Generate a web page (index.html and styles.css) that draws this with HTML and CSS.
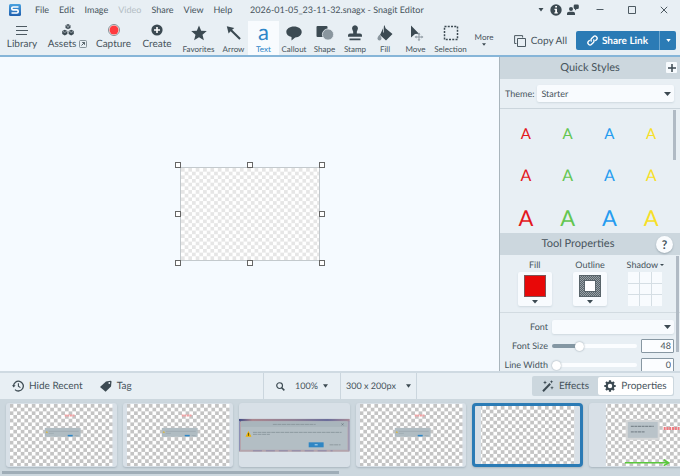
FILE: index.html
```html
<!DOCTYPE html>
<html lang="en">
<head>
<meta charset="utf-8">
<title>2026-01-05_23-11-32.snagx - Snagit Editor</title>
<link rel="stylesheet" href="styles.css">
</head>
<body>
<svg class="defs" aria-hidden="true">
  <defs>
    <pattern id="check" width="7.400" height="7.400" patternUnits="userSpaceOnUse">
      <rect width="7.400" height="7.400" fill="#fff"/>
      <path d="M3.700 0h3.700v3.700h-3.700zM0 3.700h3.700v3.700h-3.700z" fill="#c4c4c4"/>
    </pattern>
    <pattern id="hatch" width="2" height="2" patternUnits="userSpaceOnUse">
      <rect width="2" height="2" fill="#59646a"/>
      <path d="M0 0h1v1h-1zM1 1h1v1h-1z" fill="#98a1a6"/>
    </pattern>
    <linearGradient id="photo">
      <stop offset="0" stop-color="#3e4a86"/><stop offset=".12" stop-color="#a9868f"/>
      <stop offset=".5" stop-color="#8f7f95"/><stop offset=".8" stop-color="#6b6d9a"/>
      <stop offset="1" stop-color="#a78a98"/>
    </linearGradient>
    <linearGradient id="brand" x2="0" y2="1">
      <stop offset="0" stop-color="#4ba3e0"/><stop offset="1" stop-color="#1f5fae"/>
    </linearGradient>
    <symbol id="dialog-shot" viewBox="0 0 111 63">
      <rect x="4" width="103" height="63" fill="url(#check)"/>
      <path d="M59 11.500h10" stroke="#f2a0a2" stroke-width="2" stroke-dasharray="2 .6"/>
      <rect x="39" y="24" width="36" height="9" fill="#b0bcc2"/>
      <path d="M43 27.500h30M43 29.500h5" stroke="#9aa7ae" stroke-width=".7"/>
      <path d="M41 27l1.200 2h-2.400z" fill="#e2b52a"/>
      <rect x="62" y="31" width="5" height="1.500" fill="#2d86c6"/>
      <path d="M69 31.700h4" stroke="#9aa7ae" stroke-width=".7"/>
    </symbol>
  </defs>
</svg>

<div class="app">
  <header class="top">
    <div class="titlebar">
      <svg class="logo" viewBox="0 0 12 12"><rect width="12" height="12" rx="1.500" fill="url(#brand)"/><path d="M9.500 3H4.200Q2.800 3 2.800 4.400T4.200 5.900H7.800Q9.200 5.900 9.200 7.400T7.800 9H2.500" fill="none" stroke="#fff" stroke-width="1.700"/></svg>
      <nav class="menu">
        <button>File</button><button>Edit</button><button>Image</button><button disabled>Video</button><button>Share</button><button>View</button><button>Help</button>
      </nav>
      <h1 class="title">2026-01-05_23-11-32.snagx - Snagit Editor</h1>
      <div class="window-buttons">
        <button class="menu-arrow" aria-label="Options"><svg viewBox="0 0 6 4" width="6" height="4"><path d="M.5 0h5L3 3.500z"/></svg></button>
        <button class="info" aria-label="Information"><svg viewBox="0 0 12 12" width="12" height="12"><circle cx="6" cy="6" r="5.700"/><path d="M5.200 2h1.800v1.600h-1.800zM4.500 4.800h2.500v3.400h.8v1.200h-3.400v-1.200h.8v-2.200h-.7z" fill="#fff"/></svg></button>
        <button class="account" aria-label="Account"><svg viewBox="0 0 12 12" width="12" height="12"><circle cx="4" cy="5" r="2"/><path d="M0 11V9.500Q0 7.700 2 7.700H6Q8 7.700 8 9.500V11zM8 .5h2.500q1.300 0 1.300 1.300v2q0 1.200-1.300 1.200h-.8L8 6.500V5q-1.300 0-1.300-1.200v-2Q6.700.5 8 .5z"/></svg></button>
        <button class="win" aria-label="Minimize"><svg viewBox="0 0 8 8" width="8" height="8"><path class="line" d="M.5 3.500h7"/></svg></button>
        <button class="win" aria-label="Maximize"><svg viewBox="0 0 8 8" width="8" height="8"><path class="line" d="M.5.5h7v7h-7z"/></svg></button>
        <button class="win" aria-label="Close"><svg viewBox="0 0 8 8" width="8" height="8"><path class="line" d="M.8.800l6.400 6.400M7.200.800L.8 7.200"/></svg></button>
      </div>
    </div>

    <div class="toolbar">
      <button class="main-tool"><svg viewBox="0 0 12 12" width="12" height="12"><path class="line" d="M0 2.500h11M0 6.500h12M0 10.500h11"/></svg><span>Library</span></button>
      <button class="main-tool"><svg viewBox="0 0 12 12" width="12" height="12"><path d="M6 0l2.500 1.200v2.700L6 5.200 3.500 3.900V1.200zM2.800 5.800l2.600 1.300v3L2.800 11.600.2 10.100v-3zM9.200 5.800l2.600 1.300v3l-2.600 1.500-2.600-1.500v-3z"/><path d="M4 1.500l2 .9 2-.9M6 2.400v2M.8 7.400l2 1 2-1M7.200 7.400l2 1 2-1" fill="none" stroke="#c3ccd2" stroke-width=".7"/></svg><span>Assets <svg class="external" viewBox="0 0 8 8" width="8" height="8"><rect x=".5" y=".5" width="7" height="7" rx="1" fill="none" stroke="#6f7c84" stroke-width=".8"/><path d="M2.500 5.500l3-3M3.200 2.500h2.300v2.300" fill="none" stroke="#46535b" stroke-width=".9"/></svg></span></button>
      <button class="main-tool"><svg viewBox="0 0 12 12" width="12" height="12"><circle cx="6" cy="6" r="5.500" fill="#fff" stroke="#6a747a" stroke-width=".8"/><circle cx="6" cy="6" r="4.500" fill="#ff3b3f"/></svg><span>Capture</span></button>
      <button class="main-tool"><svg viewBox="0 0 12 12" width="12" height="12"><circle cx="6" cy="6" r="5.600"/><path d="M6 3v6M3 6h6" stroke="#fff" stroke-width="1.600"/></svg><span>Create</span></button>

      <button class="tool"><svg viewBox="0 0 16 16"><path d="M8 .5l2.200 5.200 5.600.4-4.300 3.600 1.400 5.500L8 12.200l-4.900 3 1.400-5.500L.2 6.100l5.600-.4z"/></svg><span>Favorites</span></button>
      <button class="tool"><svg viewBox="0 0 16 16"><path d="M.8 1.200l7.500 1.700-2.200 1.900 8.700 8.500-1.500 1.500L4.600 6.300 2.600 8.600z"/></svg><span>Arrow</span></button>
      <button class="tool active" aria-pressed="true"><b class="glyph">a</b><span>Text</span></button>
      <button class="tool"><svg viewBox="0 0 16 16"><path d="M8 1.500c4.400 0 7.700 2.400 7.700 5.500 0 3-2.700 5.200-6.500 5.400L5.500 15.500V12C2.400 11.300.3 9.400.3 7 .3 3.900 3.600 1.500 8 1.500z"/></svg><span>Callout</span></button>
      <button class="tool"><svg viewBox="0 0 18 16"><rect x=".5" y="1" width="11" height="11" rx="1"/><circle cx="12" cy="9.500" r="5.600" fill="#8a969e" stroke="#e8eff4" stroke-width=".8"/></svg><span>Shape</span></button>
      <button class="tool"><svg viewBox="0 0 16 16"><path d="M8 .3a3 3 0 0 1 2.600 4.400Q9.500 6.500 9.800 8.500H13q2 0 2 2v1.200H1V10.500q0-2 2-2h3.200Q6.500 6.500 5.400 4.700A3 3 0 0 1 8 .3zM2.500 13.500h11v1.700h-11z"/></svg><span>Stamp</span></button>
      <button class="tool"><svg viewBox="0 0 16 16"><path d="M7.500 0l1 3.300L15.500 9 9 15.500 3 10z"/><path d="M6.500 1v6.500" fill="none" stroke="#d8e0e5" stroke-width=".8"/><path d="M2.500 9.500q2 2.500 2 4a2 2 0 0 1-4 0q0-1.500 2-4z" fill="#8a969e"/></svg><span>Fill</span></button>
      <button class="tool"><svg viewBox="0 0 16 16"><path d="M3 .5l8 8.300-4 .3L3 12.500z"/><path d="M11 7.500l1.500 1.900h-1v2h2v-1l1.900 1.600-1.900 1.500v-1h-2v2h1L11 16l-1.500-1.500h1v-2h-2v1L6.600 12l1.900-1.600v1h2v-2h-1z" fill="#8a969e"/></svg><span>Move</span></button>
      <button class="tool"><svg viewBox="0 0 16 16"><rect x="1.500" y="1.500" width="13" height="13" fill="none" stroke="#3c4a52" stroke-width="1.500" stroke-dasharray="2 1.250"/></svg><span>Selection</span></button>
      <button class="more"><span>More</span><svg viewBox="0 0 6 4" width="4" height="3"><path d="M0 0h6L3 4z"/></svg></button>

      <div class="actions">
        <button class="copy"><svg viewBox="0 0 12 12" width="12" height="12"><path class="line" d="M2.500 8.500H.6V.6h8v1.900M3.500 3.500h8v8h-8z"/></svg>Copy All</button>
        <div class="share">
          <button class="share-main"><svg viewBox="0 0 12 12" width="11" height="11"><path d="M5 7.200a2.400 2.400 0 0 1 0-3.400L7 1.800a2.300 2.300 0 0 1 3.300 3.300L9 6.400M7 4.800a2.400 2.400 0 0 1 0 3.400l-2 2A2.300 2.300 0 0 1 1.700 6.900L3 5.600" fill="none" stroke="#fff" stroke-width="1.500"/></svg>Share Link</button>
          <button class="share-more" aria-label="Share options"><svg viewBox="0 0 6 4" width="5" height="3"><path d="M0 0h6L3 4z"/></svg></button>
        </div>
      </div>
    </div>
  </header>

  <div class="workspace">
    <main class="stage">
      <div class="canvas">
        <i class="handle nw"></i><i class="handle n"></i><i class="handle ne"></i><i class="handle w"></i><i class="handle e"></i><i class="handle sw"></i><i class="handle s"></i><i class="handle se"></i>
      </div>
    </main>

    <aside class="panel">
      <div class="panel-head">
        <h2>Quick Styles</h2>
        <button class="add" aria-label="Add style"><svg viewBox="0 0 10 10" width="10" height="10"><path d="M5 1v8M1 5h8" stroke="#3c4a52" stroke-width="1.500"/></svg></button>
      </div>
      <div class="theme">
        <label for="theme">Theme:</label>
        <select id="theme"><option>Starter</option></select>
      </div>
      <div class="styles">
        <button class="red">A</button><button class="green">A</button><button class="blue">A</button><button class="yellow">A</button>
        <button class="red mid">A</button><button class="green mid">A</button><button class="blue mid">A</button><button class="yellow mid">A</button>
        <button class="red big">A</button><button class="green big">A</button><button class="blue big">A</button><button class="yellow big">A</button>
        <i class="scroll"></i>
      </div>
      <div class="panel-head">
        <h2 class="tool-title">Tool Properties</h2>
        <button class="help" aria-label="Help">?</button>
      </div>
      <div class="props">
        <div class="swatches">
          <div class="swatch"><span>Fill</span><button aria-label="Fill color"><svg viewBox="0 0 22 22" width="22" height="22"><rect x=".5" y=".5" width="21" height="21" fill="#e80808" stroke="#7d5558"/></svg><svg viewBox="0 0 6 4" width="6" height="4"><path d="M0 0h6L3 3.500z"/></svg></button></div>
          <div class="swatch"><span>Outline</span><button aria-label="Outline color"><svg viewBox="0 0 22 22" width="22" height="22"><rect x=".5" y=".5" width="21" height="21" fill="url(#hatch)" stroke="#59646a"/><rect x="5.500" y="5.500" width="11" height="11" fill="#fff" stroke="#59646a"/></svg><svg viewBox="0 0 6 4" width="6" height="4"><path d="M0 0h6L3 3.500z"/></svg></button></div>
          <div class="swatch"><span>Shadow <svg viewBox="0 0 4 3" width="4" height="3"><path d="M0 0h4L2 2z"/></svg></span><div class="nine"><i></i><i></i><i></i><i></i><i></i><i></i><i></i><i></i><i></i></div></div>
        </div>
        <div class="fields">
          <label for="font">Font</label>
          <select id="font" class="wide"><option></option></select>
          <label for="size">Font Size</label>
          <input id="size" type="range" class="at-size" min="0" max="160" value="48">
          <input type="text" value="48" aria-label="Font size value">
          <label for="line">Line Width</label>
          <input id="line" type="range" min="0" max="100" value="0">
          <input type="text" value="0" aria-label="Line width value">
        </div>
        <i class="scroll"></i>
      </div>
    </aside>
  </div>

  <div class="status">
    <div class="status-left">
      <button><svg viewBox="0 0 12 12" width="12" height="12"><path d="M1.500 6A4.900 4.900 0 1 1 3 9.600" fill="none" stroke="#3c4a52" stroke-width="1.300"/><path d="M0 5.200h3.600L1.700 7.600z"/><path d="M6.400 3.200v3.100l2 1.300" fill="none" stroke="#3c4a52" stroke-width="1.100"/></svg>Hide Recent</button>
      <button><svg viewBox="0 0 12 12" width="12" height="12"><path d="M6 1.500l4.500-.7q1 0 1 1L11 6.500 5.600 11.700 0 7z"/><circle cx="9.300" cy="3" r=".9" fill="#e8eff4"/></svg>Tag</button>
    </div>
    <button class="zoom"><svg viewBox="0 0 10 10" width="9" height="9"><circle cx="4" cy="4" r="3.200" fill="none" stroke="#3c4a52" stroke-width="1.300"/><path d="M6.300 6.300l3 3" stroke="#3c4a52" stroke-width="1.700"/></svg><span>100%</span><svg viewBox="0 0 6 4" width="5" height="4"><path d="M0 0h6L3 4z"/></svg></button>
    <button class="dims"><span>300 x 200px</span><svg viewBox="0 0 6 4" width="5" height="4"><path d="M0 0h6L3 4z"/></svg></button>
    <div class="status-right">
      <div class="tabs">
        <button><svg viewBox="0 0 12 12" width="12" height="12"><path d="M1 11.200L8.200 3.800" stroke="#3c4a52" stroke-width="2"/><path d="M3 .5l.6 1.400L5 2.500l-1.400.6L3 4.500l-.6-1.400L1 2.500l1.400-.6zM9.500 0l.5 1.200 1.300.5-1.300.5-.5 1.300L9 2.200l-1.200-.5L9 1.200zM10 6l.5 1.300 1.300.5-1.300.5L10 9.700l-.5-1.400-1.300-.5 1.300-.5z"/></svg>Effects</button>
        <button class="on" aria-pressed="true"><svg viewBox="0 0 12 12" width="12" height="12"><circle cx="6" cy="6" r="3.300" fill="none" stroke="#3c4a52" stroke-width="2.200"/><path d="M6 .3v2M6 9.700v2M.3 6h2M9.700 6h2M2 2l1.400 1.400M8.600 8.600L10 10M2 10l1.400-1.400M8.600 3.400L10 2" stroke="#3c4a52" stroke-width="2.200"/></svg>Properties</button>
      </div>
    </div>
  </div>

  <footer class="tray">
    <div class="cards">
      <button class="card" aria-label="Capture 1"><svg viewBox="0 0 111 63"><use href="#dialog-shot"/></svg></button>
      <button class="card" aria-label="Capture 2"><svg viewBox="0 0 111 63"><use href="#dialog-shot"/></svg></button>
      <button class="card" aria-label="Capture 3"><svg viewBox="0 0 111 63">
        <rect y="15" width="111" height="33" fill="#b5a4ac"/><rect y="15" width="111" height="2.500" fill="url(#photo)"/><path d="M.5 17v30M110.500 17v30" stroke="#8a8fb4"/><path d="M14 47h80" stroke="#8c87a8" stroke-dasharray="9 4"/>
        <rect x="2" y="17.500" width="107" height="28.500" fill="#b3bec4"/><rect x="2" y="17.500" width="107" height="5.500" fill="#a9b5bc"/>
        <path d="M34 20.500h43M14 28.500h89M14 30.500h17M91 41h11" stroke="#8d999f" stroke-width="1" stroke-dasharray="4 .6"/><path d="M103 19.500l2 2M105 19.500l-2 2" stroke="#68757d" stroke-width=".7"/>
        <path d="M9.500 27l3 6h-6z" fill="#f0b400"/><path d="M9.500 29v3" stroke="#4a3f10" stroke-width=".8"/><rect x="70" y="38.500" width="15" height="5" fill="#2f86c4"/><path d="M76 41h3" stroke="#b9dcf2"/></svg></button>
      <button class="card" aria-label="Capture 4"><svg viewBox="0 0 111 63"><use href="#dialog-shot"/></svg></button>
      <button class="card selected" aria-label="Capture 5" aria-pressed="true"><svg viewBox="0 0 105 58"><rect x="6" width="94" height="58" fill="url(#check)"/></svg></button>
      <button class="card" aria-label="Capture 6"><svg viewBox="0 0 111 63"><rect x="17" width="94" height="63" fill="url(#check)"/><rect x="38" y="17" width="32" height="18" fill="#b9c3c9" stroke="#d5d7d8" stroke-width="2"/><path d="M42 22.500h23M42 28h14" stroke="#7c878e" stroke-width="1.200" stroke-dasharray="3 .6"/><path d="M75 24.500h16" stroke="#f07a80" stroke-width="3" stroke-dasharray="2 .8"/><path d="M36 59h44" stroke="#5ac83c" stroke-width="1.500"/><path d="M75 56l5 3-5 3" fill="none" stroke="#5ac83c" stroke-width="1.500"/></svg></button>
    </div>
    <i class="hscroll"></i>
  </footer>
</div>
</body>
</html>
```

FILE: styles.css
```css
* { box-sizing: border-box; }
body { margin: 0; color: #46535b; font: 10px/14px Lato, "Liberation Sans", sans-serif; text-rendering: geometricPrecision; }
button, select, input { font: inherit; color: inherit; text-rendering: inherit; margin: 0; padding: 0; border: 0; background: none; }
h1, h2 { margin: 0; font-weight: 400; }
svg { display: block; fill: #3c4a52; flex: none; }
.line { fill: none; stroke: #4d5a62; stroke-width: 1; }
.defs { position: absolute; width: 0; height: 0; }
.app { height: 100vh; display: flex; flex-direction: column; background: #e8eff4; overflow: hidden; }

.top { border-bottom: 2px solid #86b5d8; background: #e8eff4; }
.titlebar { display: flex; align-items: center; height: 20px; padding-left: 9px; }
.logo { width: 12px; height: 12px; }
.menu { display: flex; gap: 10px; margin-left: 14px; font-size: 9px; width: 215px; }
.menu button:disabled { color: #b4bec4; }
.title { font-size: 9px; white-space: nowrap; }
.window-buttons { display: flex; align-items: center; margin-left: auto; }
.menu-arrow { width: 6px; margin-right: 6px; }
.info { margin-right: 5px; }
.account { margin-right: 5px; }
.win { width: 32px; display: flex; justify-content: center; }

.toolbar { display: grid; height: 35px; grid-template-columns: 44px 47px 45px 42px 41px 29px 31px 30px 31px 30px 30px 31px 39px 28px 1fr; }
.toolbar > button { display: flex; flex-direction: column; align-items: center; white-space: nowrap; }
.main-tool { padding-top: 4px; gap: 1px; font-size: 10px; }
.main-tool span { display: flex; align-items: center; gap: 3px; }
.tool { padding-top: 5px; font-size: 8px; line-height: 12px; }
.tool svg { height: 16px; width: 18px; }
.tool span { margin-top: 2px; }
.tool.active { background: #f8fbfe; color: #2f86c8; margin-top: 1px; padding-top: 4px; }
.toolbar .glyph { font: 22px/14px Lato, sans-serif; height: 16px; }
.toolbar > .more { padding-top: 11px; font-size: 8px; line-height: 12px; }
.actions { display: flex; align-items: center; justify-content: flex-end; padding: 6px 4px 0 0; gap: 9px; }
.copy { display: flex; align-items: center; gap: 5px; white-space: nowrap; }
.share { display: flex; height: 19px; border-radius: 2px; background: #2b7bb5; color: #fff; font-weight: 700; }
.share svg { fill: #fff; }
.share-main { display: flex; align-items: center; justify-content: center; gap: 4px; width: 84px; white-space: nowrap; border-right: 1px solid #6ba6d0; }
.share-more { width: 16px; display: flex; align-items: center; justify-content: center; }

.workspace { flex: 1; min-height: 0; display: grid; grid-template-columns: 1fr 181px; }
.stage { background: #f5faff; display: grid; place-items: center; }
.canvas { position: relative; width: 140px; height: 94px; border: 1px solid #c3c9cd; background: repeating-conic-gradient(#fff 0 25%, #e6e6e6 0 50%) 0 0 / 5.333% 8%; }
.handle { position: absolute; width: 6px; height: 6px; border: 1px solid #666; background: #fff; }
.nw, .n, .ne { top: -6px; }
.sw, .s, .se { bottom: -6px; }
.w, .e { top: calc(50% - 3px); }
.nw, .w, .sw { left: -6px; }
.ne, .e, .se { right: -6px; }
.n, .s { left: calc(50% - 3px); }

.panel { display: flex; flex-direction: column; min-height: 0; overflow: hidden; border-left: 1px solid #a9b5bd; }
.panel-head { position: relative; flex: none; display: flex; align-items: center; justify-content: center; height: 22px; background: #ccd7de; }
.panel-head h2 { font-size: 11px; line-height: 16px; }
.tool-title { margin-right: 24px; }
.add { position: absolute; right: 3px; top: 5px; width: 11px; height: 11px; background: #f6fafd; display: grid; place-items: center; border-radius: 1px; }
.help { position: absolute; right: 7px; top: 3px; width: 17px; height: 17px; border-radius: 50%; background: #fafcfe; font-size: 12px; font-weight: 700; box-shadow: 0 1px 2px #9aa8b1; }
.theme { flex: none; display: flex; align-items: center; gap: 3px; height: 30px; padding: 0 6px 0 5px; border-bottom: 1px solid #cbd5dc; font-size: 9px; }
select { appearance: none; height: 17px; padding: 0 4px; border-radius: 2px; background: #f8fbfe url('data:image/svg+xml,<svg xmlns="http://www.w3.org/2000/svg" viewBox="0 0 7 4"><path d="M0 0h7L3.500 4z" fill="%233c4a52"/></svg>') no-repeat right 3px center / 7px 4px; box-shadow: 0 1px 2px #ced8df; }
.theme select { flex: 1; }
.styles { position: relative; flex: none; display: grid; grid-template-columns: repeat(4, 1fr); grid-auto-rows: 42px; height: 124px; padding: 4px 8px 0 5px; overflow: hidden; }
.styles button { font-size: 15px; line-height: 20px; }
.styles .mid { font-size: 16px; }
.styles .big { font-size: 22px; }
.red { color: #e3171c; } .green { color: #62c650; } .blue { color: #259cf0; } .yellow { color: #f7df28; }
.scroll { position: absolute; right: 4px; top: 1px; width: 3px; height: 50px; background: #b0bac4; }
.props { position: relative; flex: 1; min-height: 0; overflow: hidden; }
.props .scroll { right: 1px; height: 96px; }
.swatches { display: grid; grid-template-columns: repeat(3, 1fr); height: 58px; padding: 3px 7px 0; border-bottom: 1px solid #d2dbe1; font-size: 9px; }
.swatch { display: flex; flex-direction: column; align-items: center; line-height: 14px; }
.swatch span { display: flex; align-items: center; gap: 2px; }
.swatch button { width: 34px; height: 34px; background: #f8fbfe; border-radius: 2px; display: flex; flex-direction: column; align-items: center; justify-content: center; gap: 3px; box-shadow: 0 1px 2px #ced8df; }
.nine { display: grid; grid-template-columns: repeat(3, 1fr); gap: 1px; width: 34px; height: 34px; background: #d5dee4; }
.nine i { background: #f8fbfe; }
.fields { display: grid; grid-template-columns: 44px 85px 33px; grid-auto-rows: 14px; gap: 5px 4px; padding: 7px 5px 0 4px; font-size: 9px; }
.fields label { text-align: right; white-space: nowrap; }
.fields .wide { grid-column: 2 / 4; height: 14px; }
.fields input[type=text] { width: 33px; height: 14px; padding-right: 2px; text-align: right; background: #fbfdff; border: 1px solid #8797a2; border-radius: 1px; }
input[type=range] { appearance: none; width: 100%; height: 14px; }
input[type=range]::-webkit-slider-runnable-track { height: 4px; border-radius: 2px; background: #fbfdff; }
.at-size::-webkit-slider-runnable-track { background: linear-gradient(90deg, #8497a3 30%, #fbfdff 30%) !important; }
input[type=range]::-webkit-slider-thumb { appearance: none; width: 9px; height: 9px; margin-top: -2px; border-radius: 50%; background: #fff; box-shadow: 0 0 2px #8a98a2; }

.status { flex: none; display: flex; height: 28px; border-top: 2px solid #cfdae2; background: #e8eff4; }
.status button { display: flex; align-items: center; white-space: nowrap; }
.status-left { flex: 1; display: flex; gap: 17px; }
.status-left button { gap: 5px; }
.status-left button:first-child { margin-left: 12px; }
.status .zoom, .status .dims { font-size: 9px; border-left: 1px solid #cbd6de; justify-content: center; }
.zoom { width: 77px; gap: 5px; }
.zoom span { margin-left: 5px; }
.status .dims { width: 77px; gap: 10px; border-right: 1px solid #cbd6de; }
.status-right { flex: 1; display: flex; justify-content: flex-end; align-items: center; }
.tabs { display: flex; height: 20px; margin-right: 6px; background: #ccd7de; border-radius: 2px; padding: 1px; }
.tabs button { gap: 5px; justify-content: center; width: 65px; }
.tabs .on { width: 75px; background: #fff; border-radius: 2px; }

.tray { flex: none; height: 77px; padding: 4px 0 0 6px; background: #ccd7de; overflow: hidden; }
.cards { display: grid; grid-auto-flow: column; grid-auto-columns: 16.4%; gap: 6px; }
.card { height: 64px; border-radius: 3px; overflow: hidden; background: #d8e0e7; box-shadow: 0 1px 2px #a8b5be; }
.card svg { width: 100%; height: auto; }
.card.selected { border: 3px solid #2b7bb5; border-radius: 4px; }
.hscroll { display: block; width: 50%; height: 3px; margin: 4px 0 0 -4px; background: #9fadb7; }
```
